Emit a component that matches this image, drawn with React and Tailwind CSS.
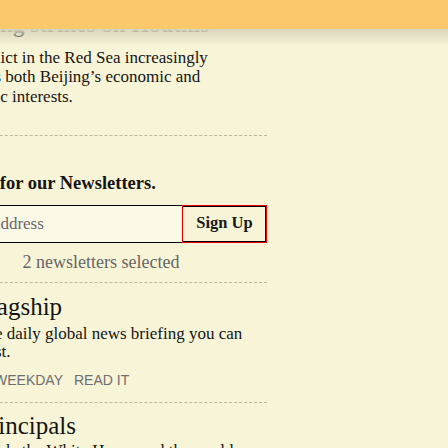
export default function App() {
  const serif = { fontFamily: '"Liberation Serif", "Times New Roman", serif' };
  const sans = { fontFamily: '"Liberation Sans", Arial, sans-serif' };
  return (
    <div className="relative h-[448px] w-[448px] overflow-hidden bg-[#f8f4d7] text-[#141414]" style={serif}>
      {/* sticky banner over the scrolled article */}
      <div className="absolute inset-x-0 top-0 z-10 h-[29px] bg-[#fbc96c]" />
      <div className="pointer-events-none absolute inset-x-0 top-[29px] z-10 h-[17px] bg-gradient-to-b from-[#d9d6bd] to-transparent" />

      <div className="-ml-[65px] w-[332px]">
        <h2 className="pt-[12px] text-[23px] font-bold leading-[26px] whitespace-nowrap">Bombing strikes on Houthis</h2>
        <p className="mt-[10px] text-[17px] leading-[19.25px] whitespace-nowrap">
          The conflict in the Red Sea increasingly
          <br />
          undercuts both Beijing’s economic and
          <br />
          diplomatic interests.
        </p>
        <div className="mt-[29px] border-t border-dashed border-[#bcb79e]" />

        <h3 className="mt-[36px] text-[18.5px] font-bold leading-[22px] whitespace-nowrap">Sign up for our Newsletters.</h3>
        <div className="mt-[11px] flex h-[38px]">
          <div className="flex flex-1 items-center border-y border-l border-black bg-[#fcf9e6] pl-[12px] text-[17px] text-[#666]">
            Email address
          </div>
          <button className="w-[85px] border border-[#e60000] text-[16.5px] font-bold text-[#1a1a1a] shadow-[inset_-1px_1px_0_#000,inset_0_-1px_0_#000]">
            Sign Up
          </button>
        </div>
        <p className="mt-[8px] text-center text-[18px] leading-[22px] text-[#666]">2 newsletters selected</p>
        <div className="mt-[9px] border-t border-dashed border-[#bcb79e]" />

        <div className="pl-[41px]">
          <h4 className="mt-[9px] text-[25px] leading-[30px]">Flagship</h4>
          <p className="mt-[3.5px] text-[17px] leading-[17.5px] whitespace-nowrap">
            The daily global news briefing you can
            <br />
            trust.
          </p>
          <div className="mt-[12px] flex gap-[11px] pl-[18px] text-[14px] leading-[16px] uppercase text-[#6e6e6e]" style={sans}>
            <span>Weekday</span>
            <span>Read it</span>
          </div>
        </div>
        <div className="mt-[13.5px] border-t border-dashed border-[#bcb79e]" />

        <div className="pl-[41px]">
          <h4 className="mt-[8px] text-[25px] leading-[30px]">Principals</h4>
          <p className="mt-[1px] text-[17px] leading-[17.5px] whitespace-nowrap">
            Inside the White House and the world
          </p>
        </div>
      </div>
    </div>
  );
}
